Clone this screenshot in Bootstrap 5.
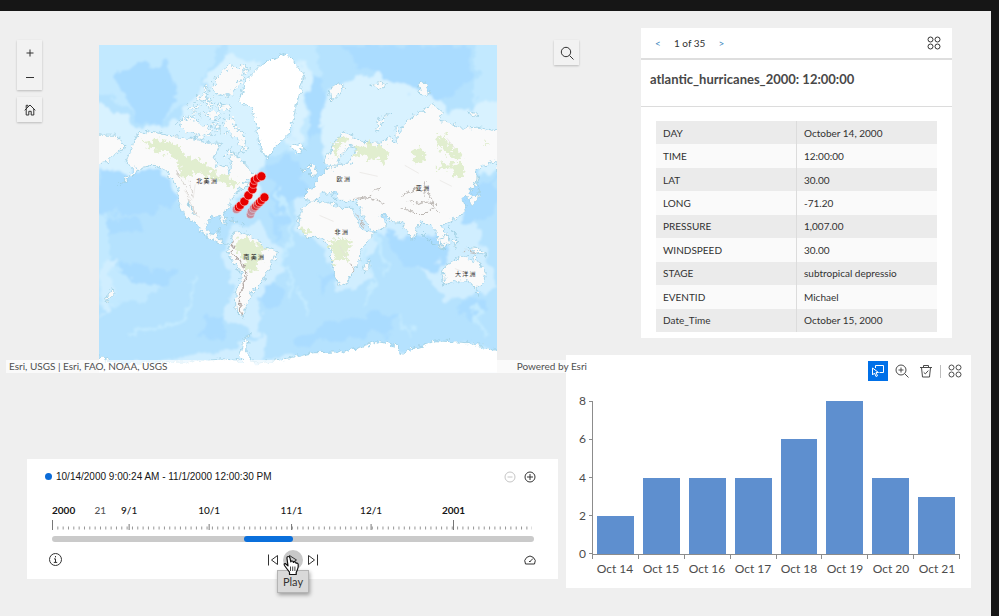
<!DOCTYPE html>
<html lang="en">
<head>
<meta charset="utf-8">
<meta name="viewport" content="width=device-width, initial-scale=1">
<title>Atlantic hurricanes 2000</title>
<link href="https://cdn.jsdelivr.net/npm/bootstrap@5.3.0/dist/css/bootstrap.min.css" rel="stylesheet">
<style>
  body { background: #161616; font-family: Lato, "Noto Sans", sans-serif; font-size: 10px; line-height: 16px; color: #323232; }
  .stage-frame { padding: 11px 8px 0 0; min-height: 100vh; display: grid; }
  .dashboard { background: #efefef; display: grid; grid-template-columns: minmax(0, 560fr) minmax(0, 405fr); padding: 0 20px 28px 6px; align-items: start; }
  .left-side { z-index: 1; }
  .plain-btn { border: 0; background: transparent; padding: 0; color: #323232; display: inline-flex; align-items: center; justify-content: center; }
  .plain-btn:disabled { color: #c6c6c6; }
  svg { display: block; }
  .ico { fill: none; stroke: currentColor; stroke-width: 1; }

  .map-view { padding: 29px 14px 0 11px; margin-right: -27px; gap: 57px; }
  .map-tools-col { gap: 7px; }
  .map-box { margin-top: 5px; min-width: 0; }
  .map-box svg { width: 100%; height: auto; }
  .map-tool { background: #f2f2f2; box-shadow: 0 1px 2px rgba(0,0,0,.22); }
  .map-tool .plain-btn { width: 25px; height: 25px; }
  .attribution { left: 0; right: 0; bottom: 0; height: 13px; line-height: 13px; background: rgba(255,255,255,.66); color: #505050; padding: 0 6px 0 3px; }
  .map-label { font: 6px "Noto Sans CJK SC", sans-serif; fill: #222; word-spacing: normal; }

  .timeline { background: #fff; margin: 86px 8px 0 21px; padding: 10px 22px 9px 18px; color: #151515; }
  .time-dot { width: 7px; height: 7px; background: #0a6bd8; }
  .time-range { font-family: "Liberation Sans", sans-serif; }
  .time-body { margin-left: 7px; margin-right: 2px; }
  .axis text { font-size: 10px; fill: #151515; text-anchor: middle; font-weight: 500; }
  .axis .year { font-weight: 700; }
  .axis .first { text-anchor: start; }
  .axis .faint { fill: #555; }
  .slider-box { height: 6px; display: grid; background: #cacaca; border-radius: 3px; overflow: hidden; }
  .slider-box > * { grid-area: 1 / 1; }
  .slider-fill { background: #0a6fdb; border-radius: 3px; }
  .slider-box input { width: 100%; height: 6px; margin: 0; opacity: 0; pointer-events: none; }
  .slider-box input::-webkit-slider-thumb { pointer-events: auto; }
  .play-btn { width: 20px; height: 20px; background: #c8c8c8; }
  .play-tip { top: 20px; left: -6px; width: 32px; height: 23px; line-height: 21px; font-size: 11px; background: #d9d9d9; border: 1px solid #b4b4b4; box-shadow: 1px 2px 4px rgba(0,0,0,.35); color: #333; }
  .hand { left: -1px; top: 4px; z-index: 2; pointer-events: none; }

  .feature-panel { background: #fff; margin: 17px 19px 0 75px; }
  .feature-head { height: 32px; border-bottom: 2px solid #dedede; padding: 0 10px 0 13px; }
  .feature-head .step { color: #3c86bd; width: 8px; }
  .feature-head .count { margin: 0 12px; }
  .feature-title { font-size: 13px; line-height: 16px; color: #484848; padding: 11px 9px 19px; border-bottom: 1px solid #dcdcdc; margin: 0; }
  .feature-body { padding: 14px 15px 6px; }
  .attr { width: 100%; height: 211px; line-height: 14px; color: #323232; }
  .attr th, .attr td { font-weight: 400; padding: 0 7px; width: 50%; vertical-align: middle; }
  .attr th { border-right: 1px solid #dcdcdc; }
  .attr tr { background: #fafafa; }
  .attr tr:nth-child(odd) { background: #ebebeb; }

  .chart-panel { background: #fff; margin-top: 17px; padding: 6px 6px 11px 13px; }
  .chart-tools .plain-btn { width: 20px; height: 20px; color: #4a4a4a; }
  .chart-tools .picked { background: #0070e8; color: #fff; }
  .tool-rule { width: 1px; height: 13px; background: #bdbdbd; }
  .chart-grid { display: grid; grid-template-columns: 13px minmax(0, 1fr); margin-top: 20px; margin-right: 5px; font-size: 12px; color: #4c4c4c; }
  .y-axis { height: 153px; }
  .y-axis span { height: 0; line-height: 0; }
  .plot { border-left: 1px solid #8c8c8c; border-bottom: 1px solid #8c8c8c; height: 154px; }
  .plot-col { flex: 1 1 0; padding: 0 5px 0 4px; }
  .bar { background: #5e8fcf; }
  .y-ticks { width: 4px; margin-right: -1px; }
  .y-ticks i { height: 1px; background: #8c8c8c; }
  .x-cell { flex: 1 1 0; padding-top: 2px; line-height: 16px; }
  .x-ticks i { width: 1px; height: 4px; background: #8c8c8c; }
</style>
</head>
<body>
<div class="stage-frame">
<main class="dashboard">
  <div class="left-side">
    <section class="map-view position-relative d-flex align-items-start" aria-label="Map">
      <div class="map-tools-col d-flex flex-column">
        <div class="map-tool d-flex flex-column">
          <button class="plain-btn" aria-label="Zoom in"><svg class="ico" width="12" height="12"><path d="M6 2.5v7M2.5 6h7"/></svg></button>
          <button class="plain-btn" aria-label="Zoom out"><svg class="ico" width="12" height="12"><path d="M2 5.5h8"/></svg></button>
        </div>
        <div class="map-tool"><button class="plain-btn" aria-label="Home"><svg class="ico" width="12" height="12" viewBox="0 0 12 12"><path d="M.7 6.3 6 1l5.3 5.3M2.2 5v6h2.600V7.300h2.400V11h2.600V5M2.200 4.600V1.300h1.700v1.400"/></svg></button></div>
      </div>
      <div class="map-box flex-fill">
        <svg viewBox="100 45 397 327" role="img" aria-label="World map with hurricane positions">
          <defs>
            <filter id="coast" x="-5%" y="-5%" width="110%" height="110%"><feTurbulence type="fractalNoise" baseFrequency=".2" numOctaves="3" seed="4"/><feDisplacementMap in="SourceGraphic" scale="8" xChannelSelector="R" yChannelSelector="G"/></filter>
            <filter id="islands" x="-5%" y="-5%" width="110%" height="110%"><feTurbulence type="fractalNoise" baseFrequency=".22" numOctaves="3" seed="7"/><feDisplacementMap in="SourceGraphic" scale="13" xChannelSelector="R" yChannelSelector="G"/></filter>
            <filter id="patch" x="-5%" y="-5%" width="110%" height="110%"><feTurbulence type="fractalNoise" baseFrequency=".06" numOctaves="4" seed="9"/><feDisplacementMap in="SourceGraphic" scale="22" xChannelSelector="R" yChannelSelector="G"/><feGaussianBlur stdDeviation="1.200"/></filter>
            <clipPath id="edge"><path d="M100 45h397v327H100z"/></clipPath>
          </defs>
          <g clip-path="url(#edge)">
          <rect x="100" y="45" width="397" height="327" fill="#b5e2fe"/>
          <g filter="url(#patch)">
            <path fill="#c2e9ff" d="M90 35h130l-8 35-25 35-25 20-30-15-42-25zM225 40h90l10 60-20 50-70 10zM475 40h40v130h-40zM90 205h20v60l60 10-10 20-60 10z"/>
            <path fill="#d8f2ff" d="M90 100l40 20 45 10 20-35 35-40 30 5-5 60 10 40-10 40-60 10-80-30-40-20zM328 90l55-22 45 10 22 35 40-12 30 5v60l-190 15-10-60zM295 60l15 15-8 65-12 12z"/>
            <path fill="#d0eeff" d="M228 225l30 0 28 22-5 30-20 30-2 25-30-8 2-45-8-30zM295 198l30-12 50 20-3 65-32 25-15-50-30-15zM405 210l55-15 22 40 15 55-50 10-40-45-30-25zM105 260l12-5-5 45-12 20zM230 350l35-20 0 30 230-15v30H100v-10z"/>
            <path fill="#aadcff" d="M118 72l50-10 10 25-15 40-20-8-20-25zM345 45h125v35l-30 20-35-15-50-20zM310 75l15 5-5 50-12 15zM100 168l65 5 15 25-30 15-50 0zM120 262l60 10-10 15-40-5zM200 320l30-5-5 20-25 2zM260 285l25 3-5 15-20 2zM265 165l35-10 5 35-25 20zM275 210l15 10-10 18zM385 235l55 0 10 18-15 20-40-15zM340 320l60-8-10 20-90 14-5-8zM455 195l42-20v40l-35 10zM460 300l30-2-5 15-25 3zM320 270l12 5-5 20zM105 215l30 2 10 13-35 4z"/>
            <path fill="none" stroke="#c4ebff" stroke-width="3" d="M192 275l-5 40M300 285l12 30M400 310l12 25M475 305l12 30M365 245l8 40-6 20M130 335l60-18M280 190l10 40-8 30 12 40M375 232l12 40"/>
          </g>
          <g filter="url(#coast)" fill="#fafafa" stroke="#98cde2" stroke-width=".8">
            <path d="M90 135l27 0 9 12-9 6-8 8-19 3z"/>
            <path d="M133 147l4-12 13-5 17 5 13 1 20 4 13 3 9 0-7 14 2 7 10 4 3 7 2-8-2-10 3-5 7 5 8 10 7 6 8 6-11-2-9 6 6 0 8-4-3 6-15 4-7 10-3 7-5 7 2 10-2 0-4-8-8 2-5 6 2 9 7 1 3-4-1 9 9 5-9-1-10-6-8-6-5-7-7-6-4-6-4-8-2-7 2-7-7-10-8-10-10-4-12 2-14 12-9 5 9-8 7-8-9-6z"/>
            <path d="M188 202l9 14-2-1z"/>
            <path fill="#fff" d="M247 80l-7 20 13 10 5 23 4 17 6 9 7-12 15-14 3-10 4-20 5-15 3-12-8-11-4-6-10-5-20 10-8 8zM291 146l5-3 7 2 2 4-8 3z"/>
            <path d="M233 233l10-1 14 6 6 9 14 3-2 9-5 10-7 12-8 8-5 8-3 8-4 8 2 5-8-7-1-13 4-17 2-8-9-12-5-10 4-10zM230 219l8 2-3 1zM240 223l5 1-3 1z"/>
            <path d="M302 208l11-7 17 1 10 5 12 0 3 8 7 15 11 2-11 18-2 10-7 12-6 10-7 4-5-11-3-12 0-13-5-8-7-5-13 0-7-9-1-10zM370 257l-1 10-4 6-1-7z"/>
            <path d="M345 131l17 11 18 1 10-6 7 6-2-18 5 7 10-14 13-8 10-6 9 8-2 8 10 2 13 6 14-1 32 6v25l-7 12 1 10-5-9-1-11-10 4-11 5 2 10-5 9-4 1 3 11-5-4-4 2 4 10-9 10-10 4-6 3 4 12-5 4 3 10-6-9-2-11-8-9-6 0-5 7-4 11-5-9-5-9-11-1-9-8-3 0 8 11-13 9-8-10-6-13-4-9-16 0-4-8-5-2 4 9-6-8-7 1-8 8-9-2 0-10 10-2-1-5 6-6 4-6 12-6 11 0 6-9 3-8-8-2-9 13-3 7-5 5-6-10 7-14z"/>
            <path d="M310 162l4 2 4 10-8 2zM303 169l4 0 0 4-4 0zM376 129l4-10 10-7-6 8-6 12zM330 90l10-7 5 4-8 10-6 4zM370 85l12-3 5 3-8 4zM418 83l6-2 6 11-3 5-6-3zM470 110l8 4-5 3z"/>
            <path d="M442 268l8-5 8-5 9-2 5 6 3-7 5 10 6 7-3 11-6 5-7-6-13-2-12 4zM476 292l4 0-2 4zM422 232l13 12 12 5-9-2zM440 238l8-3 2 9-7 2zM452 240l5 0-1 7zM467 247l10 1 11 6-8-1-7-3zM450 225l4 8 3 4zM469 201l8-6 3-9-1 11-7 7zM477 176l3 5-3 2zM113 288l3 5-8 7-3 2z"/>
            <path fill="#fff" d="M95 353l10 4 10 6 80-2 30-3 20 3-5-6 3-12 8-11-4 11 1 10 8 10 40-7 18-4 30-1 35-10 18 4 4 10 12-8 23-7 33 2 25 7 20 8v25H95z"/>
          </g>
          <g filter="url(#islands)" fill="#fafafa" stroke="#98cde2" stroke-width=".8">
            <path d="M213 83l8-10 9-7 18 1-5 12-12 16-14 0zM230 117l10 12 8 14-5 10-5-13-8-7-7-11zM180 120l12-4 8 7 10 4 3 9-16 0-15-6zM188 108l8-4 3 4-9 3zM198 96l8-3 3 6-9 3zM205 112l9-2 8 6-10 3zM218 103l9 1 4 6-12-1zM226 152l5-4 4 6-6 1zM206 86l4 4-5 2zM213 122l6 2 2 8-6-2zM192 112l7 1-1 4zM207 100l7 2 1 6-7-2z"/>
          </g>
          <g filter="url(#islands)" fill="#dcebc7" opacity=".85">
            <path d="M143 142l15-3 10 2 12 5 6 10 12 3 12 8 8 8 10 1 12 6-6 5-20-8-14-6-8-1-8 10-4-16-8-12-14-3zM240 237l13 2 12 10-5 12-4 10-10 0-2-14-8-10z"/>
            <path d="M328 238l5 3 7-3 10 2 0 8-5 2 5 8-14 4-3-8-1-4zM302 228l8 1 2 5-9-1zM358 147l8-2 4-3 7 5 7-1 6 12-8 5-4-6-10 2-5-4-11 3zM412 150l8-2 6 6-3 8-8 0zM436 138l8-4 4 8 6 6 8 6-2 6-18-8zM436 166l12-3 18 1-4 14-6 0-6-10-14 2zM334 142l10-6 6 4-8 4-4 12-6 2zM485 140l5 4-6 2z"/>
          </g>
          <g filter="url(#coast)" fill="none" stroke="#bdb8b4" stroke-width="1">
            <path stroke="#b3a9a5" stroke-width="1.400" d="M234 240l-2 12 12 12 3 12-4 10-3 15 2 14"/>
            <path stroke="#d4d0cc" d="M178 172l8 14 4 16 8 14M191 180l2 18"/>
            <path d="M400 197l14-8 14 2 4 10-14 3-12-4M402 207l12 6 14 0 6-6M355 199l16-2 14 6M424 195l2-14M373 190l8-2M430 200l8 10M465 250l12 2M357 213l8 14M352 262l2 10"/>
          </g>
          <g fill="none" stroke="#e4e1de" stroke-width=".6"><path d="M185 190l8 10M196 184l-2 14M405 165l14 8M360 172l18 4M440 180l12 6M320 215l14 6M340 245l6 12M455 268l10 4M447 138l8 10"/></g>
          <g class="map-label"><text x="197" y="183">北 美 洲</text><text x="337" y="181">欧 洲</text><text x="416" y="190">亚 洲</text><text x="335" y="234">非 洲</text><text x="244" y="258">南 美 洲</text><text x="455" y="275">大 洋 洲</text></g>
          <g fill="#e60000" stroke="#fbd0d0" stroke-width=".6">
            <g opacity=".4"><circle cx="237" cy="209" r="4"/><circle cx="251" cy="214" r="4"/><circle cx="252" cy="211" r="4"/><circle cx="254" cy="208" r="4"/></g>
            <circle cx="239" cy="207" r="4"/><circle cx="241" cy="205" r="4"/><circle cx="245" cy="201" r="4.500"/><circle cx="249" cy="195" r="4.500"/><circle cx="253" cy="189" r="4.500"/><circle cx="254" cy="184" r="4"/><circle cx="255" cy="180" r="4"/><circle cx="258" cy="178" r="4"/><circle cx="262" cy="176" r="4.500"/>
            <g opacity=".65"><circle cx="256" cy="206" r="4"/><circle cx="258" cy="204" r="4"/></g><circle cx="260" cy="202" r="4"/><circle cx="262" cy="200" r="4"/><circle cx="265" cy="197" r="4.500"/>
          </g>
          </g>
        </svg>
      </div>
      <div class="map-tool"><button class="plain-btn" aria-label="Search"><svg class="ico" width="14" height="14"><circle cx="6" cy="6" r="4.700"/><path d="m9.500 9.500 4 4"/></svg></button></div>
      <div class="attribution position-absolute d-flex justify-content-between"><span>Esri, USGS | Esri, FAO, NOAA, USGS</span><span>Powered by Esri</span></div>
    </section>

    <section class="timeline" aria-label="Time slider">
      <div class="d-flex align-items-center">
        <span class="time-dot rounded-circle me-1"></span>
        <span class="time-range flex-fill">10/14/2000 9:00:24 AM - 11/1/2000 12:00:30 PM</span>
        <button class="plain-btn" aria-label="Zoom out time" disabled><svg class="ico" width="12" height="12"><circle cx="6" cy="6" r="5"/><path d="M3.500 6h5"/></svg></button>
        <button class="plain-btn ms-2" aria-label="Zoom in time"><svg class="ico" width="12" height="12"><circle cx="6" cy="6" r="5"/><path d="M3 6h6M6 3v6"/></svg></button>
      </div>
      <div class="time-body">
        <svg class="axis" width="100%" height="43" overflow="visible">
          <text class="year first" x="0" y="29">2000</text><text class="faint" x="10%" y="29">21</text><text x="16%" y="29">9/1</text><text x="32.600%" y="29">10/1</text><text x="49.700%" y="29">11/1</text><text x="66.200%" y="29">12/1</text><text class="year" x="83.300%" y="29">2001</text>
          <path d="M0 43h480" stroke="#969696" stroke-width="3" stroke-dasharray="1 4.330"/>
          <g stroke="#777"><path d="M.5 35v10"/><line x1="16%" x2="16%" y1="39" y2="45"/><line x1="32.600%" x2="32.600%" y1="39" y2="45"/><line x1="49.700%" x2="49.700%" y1="39" y2="45"/><line x1="66.200%" x2="66.200%" y1="39" y2="45"/><line x1="83.300%" x2="83.300%" y1="35" y2="45"/></g>
        </svg>
        <div class="slider-box mt-2">
          <div class="slider-fill" style="margin-left:39.900%;width:10.200%"></div>
          <input type="range" aria-label="Start time" min="0" max="1000" value="399"><input type="range" aria-label="End time" min="0" max="1000" value="501">
        </div>
      </div>
      <div class="d-flex align-items-center justify-content-between mt-2">
        <button class="plain-btn ms-1" aria-label="Information"><svg class="ico" width="13" height="13"><circle cx="6.500" cy="6.500" r="6"/><path d="M6.500 3v1.400M5 5.900h1.500v3.300M4.800 9.400h3.400"/></svg></button>
        <div class="d-flex align-items-center">
          <button class="plain-btn me-1" aria-label="Previous"><svg class="ico" width="12" height="12"><path d="M1.500.5v11M10.500 1.500v9l-6-4.500z"/></svg></button>
          <div class="position-relative">
            <button class="plain-btn play-btn rounded-circle" aria-label="Play" aria-describedby="tip"><svg class="ico" width="12" height="12"><path d="m2.500 1.500 7 4.500-7 4.500z"/></svg></button>
            <div class="play-tip position-absolute text-center" id="tip" role="tooltip">Play</div>
            <svg class="hand position-absolute" width="18" height="22" viewBox="0 0 18 22"><path fill="#fff" stroke="#111" stroke-width="1.200" stroke-linejoin="round" d="M7.500 20.500v-2.300L4.700 14.500 2.500 11.500Q1.500 9.500 3.200 9.500L6 11.800 5 4.500Q4.800 2.500 6.200 2.500T8 4l.8 4Q9 6.800 10.200 7t1.200 1.500q.4-1 1.500-.7t1.200 1.500q1.800-.6 2.100 1.200.3 3-.7 5l-1.300 3v2z"/><path stroke="#333" stroke-width=".9" d="M8.500 12.500v4.500M10.700 12.500v4.500M12.900 12.500v4.500"/></svg>
          </div>
          <button class="plain-btn ms-1" aria-label="Next"><svg class="ico" width="12" height="12"><path d="M10.500.5v11M1.500 1.500v9l6-4.500z"/></svg></button>
        </div>
        <button class="plain-btn" aria-label="Speed"><svg class="ico" width="12" height="12"><path d="M1.500 10A5.200 5.200 0 1 1 10.500 10zM5.500 8l3.500-3.500M5 7.500h1.500"/></svg></button>
      </div>
    </section>
  </div>

  <div>
    <section class="feature-panel" aria-label="Feature details">
      <div class="feature-head d-flex align-items-center">
        <button class="plain-btn step" aria-label="Previous feature">&lt;</button>
        <span class="count">1 of 35</span>
        <button class="plain-btn step" aria-label="Next feature">&gt;</button>
        <button class="plain-btn ms-auto" aria-label="Feature actions"><svg class="ico" width="16" height="16"><circle cx="4.500" cy="4.500" r="2.500"/><circle cx="11.500" cy="4.500" r="2.500"/><circle cx="4.500" cy="11.500" r="2.500"/><circle cx="11.500" cy="11.500" r="2.500"/></svg></button>
      </div>
      <h2 class="feature-title fw-bold">atlantic_hurricanes_2000: 12:00:00</h2>
      <div class="feature-body">
        <table class="attr">
          <tbody>
            <tr><th scope="row">DAY</th><td>October 14, 2000</td></tr>
            <tr><th scope="row">TIME</th><td>12:00:00</td></tr>
            <tr><th scope="row">LAT</th><td>30.00</td></tr>
            <tr><th scope="row">LONG</th><td>-71.20</td></tr>
            <tr><th scope="row">PRESSURE</th><td>1,007.00</td></tr>
            <tr><th scope="row">WINDSPEED</th><td>30.00</td></tr>
            <tr><th scope="row">STAGE</th><td>subtropical depressio</td></tr>
            <tr><th scope="row">EVENTID</th><td>Michael</td></tr>
            <tr><th scope="row">Date_Time</th><td>October 15, 2000</td></tr>
          </tbody>
        </table>
      </div>
    </section>

    <section class="chart-panel" aria-label="Events per day">
      <div class="chart-tools d-flex align-items-center justify-content-end gap-1">
        <button class="plain-btn picked" aria-label="Select by rectangle"><svg class="ico" width="14" height="14"><path d="M4.500 4V1.500h8v7H8.500M1.500 4v7l2-2 1.500 3.500 1.500-.7L5 8.500h2.500z"/></svg></button>
        <button class="plain-btn" aria-label="Zoom in"><svg class="ico" width="14" height="14"><circle cx="6" cy="6" r="5"/><path d="m9.700 9.700 3.800 3.800M3.500 6h5M6 3.500v5"/></svg></button>
        <button class="plain-btn" aria-label="Clear selection"><svg class="ico" width="14" height="14"><path d="M1 3.500h12M4.500 3.500v-2h5v2M2.500 3.500l1 9.500h7l1-9.500M4.700 8.300l1.600 1.600 3-3.300"/></svg></button>
        <span class="tool-rule"></span>
        <button class="plain-btn" aria-label="Chart actions"><svg class="ico" width="16" height="16"><circle cx="4.500" cy="4.500" r="2.500"/><circle cx="11.500" cy="4.500" r="2.500"/><circle cx="4.500" cy="11.500" r="2.500"/><circle cx="11.500" cy="11.500" r="2.500"/></svg></button>
      </div>
      <div class="chart-grid">
        <div class="d-flex">
          <div class="y-axis d-flex flex-column justify-content-between flex-fill"><span>8</span><span>6</span><span>4</span><span>2</span><span>0</span></div>
          <div class="y-ticks y-axis d-flex flex-column justify-content-between"><i></i><i></i><i></i><i></i><i></i></div>
        </div>
        <div>
          <div class="plot d-flex align-items-end" id="plot"></div>
          <div class="x-ticks d-flex justify-content-between"><i></i><i></i><i></i><i></i><i></i><i></i><i></i><i></i><i></i></div>
          <div class="d-flex text-center text-nowrap" id="days"></div>
        </div>
      </div>
    </section>
  </div>
</main>
</div>
<script src="https://cdn.jsdelivr.net/npm/bootstrap@5.3.0/dist/js/bootstrap.bundle.min.js"></script>
<script>
  const counts = [["Oct 14", 2], ["Oct 15", 4], ["Oct 16", 4], ["Oct 17", 4], ["Oct 18", 6], ["Oct 19", 8], ["Oct 20", 4], ["Oct 21", 3]];
  document.getElementById("plot").innerHTML = counts.map(c => `<div class="plot-col h-100 d-flex align-items-end"><div class="bar w-100" style="height:${c[1] / 8 * 100}%"></div></div>`).join("");
  document.getElementById("days").innerHTML = counts.map(c => `<div class="x-cell">${c[0]}</div>`).join("");
</script>
</body>
</html>
